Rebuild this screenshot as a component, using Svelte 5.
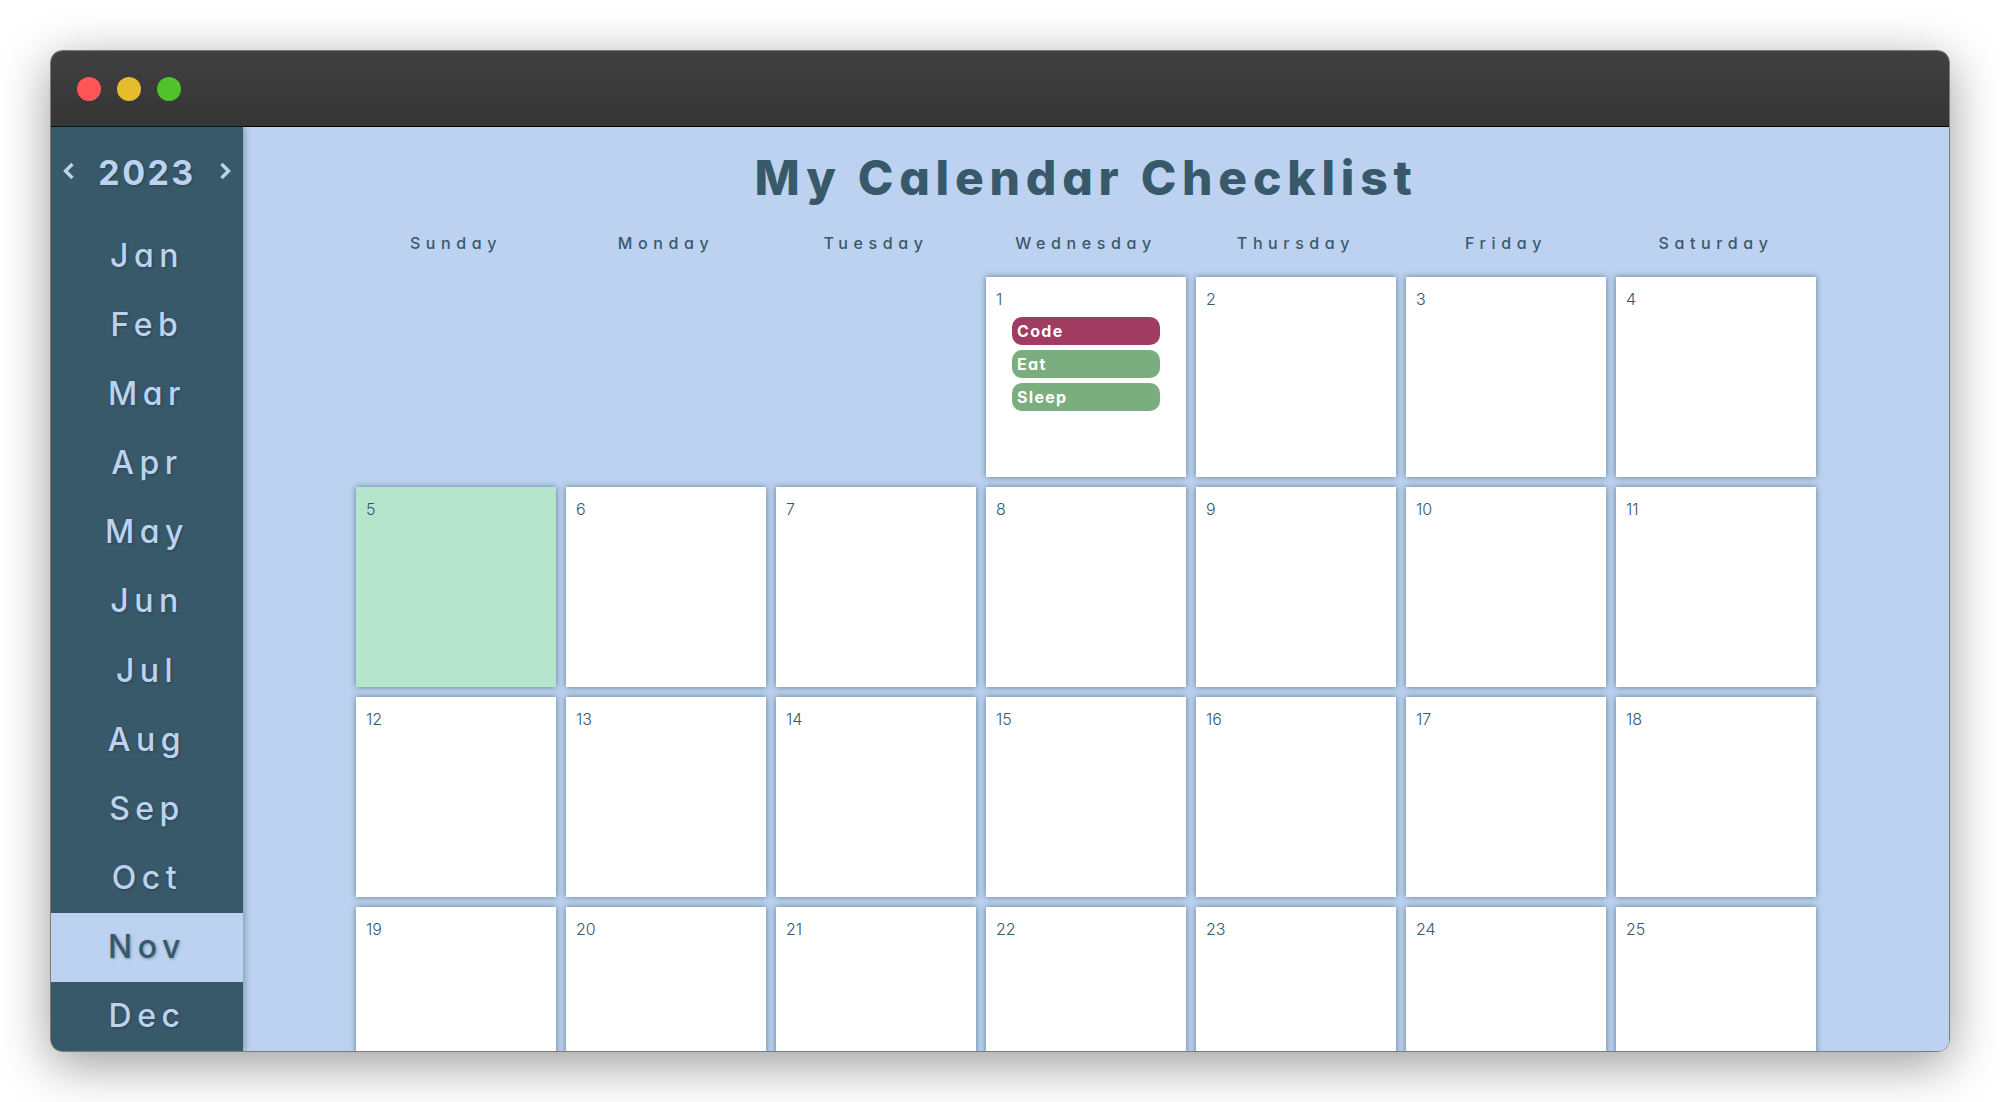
<script>
  const months = ['Jan', 'Feb', 'Mar', 'Apr', 'May', 'Jun', 'Jul', 'Aug', 'Sep', 'Oct', 'Nov', 'Dec'];
  const weekdays = ['Sunday', 'Monday', 'Tuesday', 'Wednesday', 'Thursday', 'Friday', 'Saturday'];
  const current = 'Nov';
  const today = 5;
  const tasks = {
    1: [
      { name: 'Code', kind: 'todo' },
      { name: 'Eat', kind: 'done' },
      { name: 'Sleep', kind: 'done' }
    ]
  };
  const leading = [0, 1, 2];
  const days = Array.from({ length: 25 }, (_, i) => i + 1);
</script>

<div class="window">
  <div class="titlebar">
    <span class="dot red"></span>
    <span class="dot yellow"></span>
    <span class="dot green"></span>
  </div>
  <div class="body">
    <aside class="sidebar">
      <div class="year">
        <svg class="chev" width="14" height="20" viewBox="0 0 14 20"><path d="M10.5 3 3.5 10l7 7" /></svg>
        <span class="year-num">2023</span>
        <svg class="chev" width="14" height="20" viewBox="0 0 14 20"><path d="M3.5 3l7 7-7 7" /></svg>
      </div>
      <ul class="months">
        {#each months as m}
          <li class:active={m === current}>{m}</li>
        {/each}
      </ul>
    </aside>
    <main class="main">
      <h1>My Calendar Checklist</h1>
      <div class="weekdays">
        {#each weekdays as d}
          <div>{d}</div>
        {/each}
      </div>
      <div class="grid">
        {#each leading as _}
          <div></div>
        {/each}
        {#each days as day}
          <div class="cell" class:today={day === today}>
            <span class="num">{day}</span>
            {#each tasks[day] ?? [] as t}
              <div class="task {t.kind}">{t.name}</div>
            {/each}
          </div>
        {/each}
      </div>
    </main>
  </div>
</div>

<style>
  :global(body) {
    background: #fff;
    font-family: Inter, 'Liberation Sans', sans-serif;
    font-feature-settings: 'cv11';
    overflow: hidden;
  }

  .window {
    box-sizing: border-box;
    width: 1900px;
    height: 1002px;
    margin: 50px;
    border: 1px solid #7c7c7c;
    border-radius: 12px;
    overflow: hidden;
    box-shadow: 0 12px 50px rgba(0, 0, 0, 0.4);
    display: flex;
    flex-direction: column;
  }

  .titlebar {
    flex: 0 0 76px;
    display: flex;
    align-items: center;
    gap: 16px;
    padding: 0 0 0 26px;
    box-sizing: border-box;
    background: linear-gradient(#404040, #353535);
    border-bottom: 1px solid #000;
  }

  .dot {
    width: 24px;
    height: 24px;
    border-radius: 50%;
  }
  .red { background: #ff5555; }
  .yellow { background: #e6bc2f; }
  .green { background: #50c22b; }

  .body {
    flex: 1;
    min-height: 0;
    display: flex;
  }

  .sidebar {
    flex: 0 0 192px;
    display: flex;
    flex-direction: column;
    background: #385969;
    color: #bcd2f0;
    box-shadow: 2px 0 6px rgba(56, 89, 105, 0.45);
    z-index: 1;
  }

  .year {
    flex: 0 0 94px;
    box-sizing: border-box;
    display: flex;
    align-items: center;
    justify-content: space-between;
    padding: 0 11px 6px 11px;
  }

  .year-num {
    font-size: 34px;
    font-weight: 700;
    letter-spacing: 2.4px;
    padding-top: 2px;
    text-shadow: 1px 1px 3px rgba(0, 0, 0, 0.25);
  }

  .chev path {
    fill: none;
    stroke: #bcd2f0;
    stroke-width: 3.4;
  }

  .months {
    flex: 1;
    display: grid;
    grid-auto-rows: 1fr;
    list-style: none;
    margin: 0;
    padding: 0;
  }

  .months li {
    display: flex;
    align-items: center;
    justify-content: center;
    padding-bottom: 1px;
    font-size: 32px;
    font-weight: 500;
    letter-spacing: 5.5px;
    text-shadow: 1px 1px 3px rgba(0, 0, 0, 0.25);
  }

  .months li.active {
    background: #bcd2f0;
    color: #385969;
    text-shadow: 1px 1px 3px rgba(56, 89, 105, 0.5);
  }

  .main {
    flex: 1;
    min-width: 0;
    overflow: hidden;
    box-sizing: border-box;
    padding: 0 0 0 113px;
    background: #bcd2f0;
    color: #385969;
  }

  h1 {
    box-sizing: border-box;
    width: 1460px;
    height: 102px;
    margin: 0;
    padding-bottom: 2px;
    display: flex;
    align-items: center;
    justify-content: center;
    font-size: 48px;
    font-weight: 800;
    letter-spacing: 5.75px;
  }

  .weekdays,
  .grid {
    display: grid;
    grid-template-columns: repeat(7, 200px);
    column-gap: 10px;
    row-gap: 10px;
  }

  .weekdays {
    height: 48px;
    align-items: start;
    text-align: center;
    font-size: 16px;
    font-weight: 500;
    line-height: 28px;
    letter-spacing: 5.6px;
  }

  .cell {
    box-sizing: border-box;
    height: 200px;
    padding: 12px 0 0 10px;
    background: #fff;
    box-shadow: 0 0 6px rgba(56, 89, 105, 0.7);
  }

  .cell.today {
    background: #b5e6cd;
  }

  .num {
    display: block;
    height: 28px;
    font-size: 16px;
    font-weight: 300;
    line-height: 20px;
  }

  .task {
    box-sizing: border-box;
    width: 148px;
    height: 28px;
    margin: 0 0 5px 16px;
    padding-left: 5px;
    border-radius: 10px;
    color: #fff;
    font-size: 16px;
    font-weight: 700;
    line-height: 28px;
    letter-spacing: 1.3px;
  }

  .task.todo { background: #a03c62; }
  .task.done { background: #7bae7f; }
</style>
